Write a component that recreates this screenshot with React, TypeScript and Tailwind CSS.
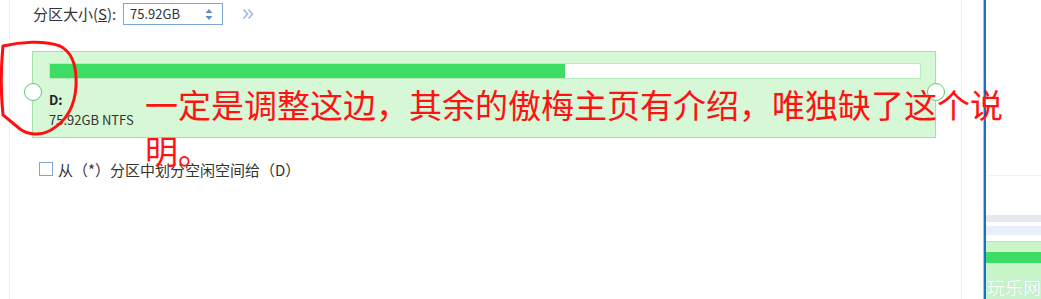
import React from "react";

const ui = { fontFamily: '"Noto Sans CJK SC", "Noto Sans", sans-serif' };

const Spinner = () => (
  <svg width="8" height="16" viewBox="0 0 8 16" className="shrink-0">
    <path d="M4 3 L7.5 7 L0.5 7 Z" fill="#5b8fd0" />
    <path d="M0.5 10 L7.5 10 L4 14 Z" fill="#5b8fd0" />
  </svg>
);

const Chevrons = () => (
  <svg width="12" height="12" viewBox="0 0 12 12" fill="none" stroke="#9cb9e2" strokeWidth="1.6">
    <polyline points="1.5,1.5 5.5,6 1.5,10.5" />
    <polyline points="6.5,1.5 10.5,6 6.5,10.5" />
  </svg>
);

const Handle = ({ side }: { side: "left" | "right" }) => (
  <div
    className={`absolute top-[31px] h-[18px] w-[18px] rounded-full border border-[#63c872] bg-white ${
      side === "left" ? "left-[-9px]" : "right-[-10px]"
    }`}
  />
);

export default function App() {
  return (
    <div className="relative flex h-[299px] w-[1041px] overflow-hidden bg-white text-[#333]" style={ui}>
      {/* left faint rule */}
      <div className="w-[10px] shrink-0 border-r border-[#eef1f6]" />

      {/* main form */}
      <div className="flex w-[951px] shrink-0 flex-col">
        <div className="flex h-[26px] items-center pl-[23px]">
          <span className="w-[90px] text-[15px] leading-none">
            分区大小(<span className="underline">S</span>):
          </span>
          <div className="mt-[2px] flex h-[22px] w-[100px] items-center justify-between border border-[#7ba7d7] pl-[6px] pr-[9px] text-[13px]">
            <span>75.92GB</span>
            <Spinner />
          </div>
          <div className="ml-[19px] mt-[1px]">
            <Chevrons />
          </div>
        </div>

        <div className="relative ml-[22px] mt-[25px] h-[87px] w-[904px] border border-[#a3e2a6] bg-[#d6f8d6] pl-[16px] pr-[14px] pt-[11px]">
          <div className="h-[16px] w-full border border-[#b9ecbb] bg-white">
            <div className="h-full w-[515px] bg-[#3ddc65]" />
          </div>
          <div className="mt-[13px] text-[13px] font-bold leading-[16px] text-[#222]">D:</div>
          <div className="mt-[4px] text-[13px] leading-[16px] text-[#333]">75.92GB NTFS</div>
          <Handle side="left" />
          <Handle side="right" />
        </div>

        <div className="ml-[29px] mt-[23px] flex h-[16px] items-center">
          <div className="h-[14px] w-[14px] border border-[#7ba7d7] bg-white" />
          <span className="ml-[5px] text-[15px] leading-none">从（*）分区中划分空闲空间给（D）</span>
        </div>
      </div>

      {/* right side */}
      <div className="w-px shrink-0 bg-[#eef2f7]" />
      <div className="w-[21px] shrink-0" />
      <div className="w-px shrink-0 bg-[#9fc4ea]" />
      <div className="w-[2px] shrink-0 bg-[#1a6fc9]" />
      <div className="flex flex-1 flex-col">
        <div className="h-[175px]" />
        <div className="h-px bg-[#f0f2f5]" />
        <div className="h-[39px]" />
        <div className="h-[7px] bg-[#e5e8ef]" />
        <div className="h-[4px]" />
        <div className="h-[9px] bg-[#e8effb]" />
        <div className="h-[6px]" />
        <div className="h-[11px] border-t border-[#b6ecb6] bg-[#c9f5c9]" />
        <div className="h-[11px] bg-[#3ddc65]" />
        <div className="relative flex-1 bg-[#c8f5c8]">
          <span className="absolute left-[1px] top-[15px] whitespace-nowrap text-[18px] leading-none text-white [text-shadow:0_0_1px_#9cc]">
            玩乐网
          </span>
        </div>
      </div>

      {/* annotations */}
      <div
        className="absolute left-[145px] top-[81px] w-[872px] text-[33px] leading-[46px] text-[#ff1212]"
        style={{ fontFamily: '"Noto Sans CJK SC", sans-serif' }}
      >
        一定是调整这边，其余的傲梅主页有介绍，唯独缺了这个说明。
      </div>
      <svg className="absolute left-0 top-0" width="90" height="150" viewBox="0 0 90 150" fill="none">
        <path
          d="M3 46 C20 42 44 40 60 46 C72 52 77 66 76 86 C75 105 68 120 51 130 C40 136 28 135 20 129 L3 115 C1 95 1 66 3 46"
          stroke="#ff1010"
          strokeWidth="3"
          strokeLinecap="round"
        />
      </svg>
    </div>
  );
}
